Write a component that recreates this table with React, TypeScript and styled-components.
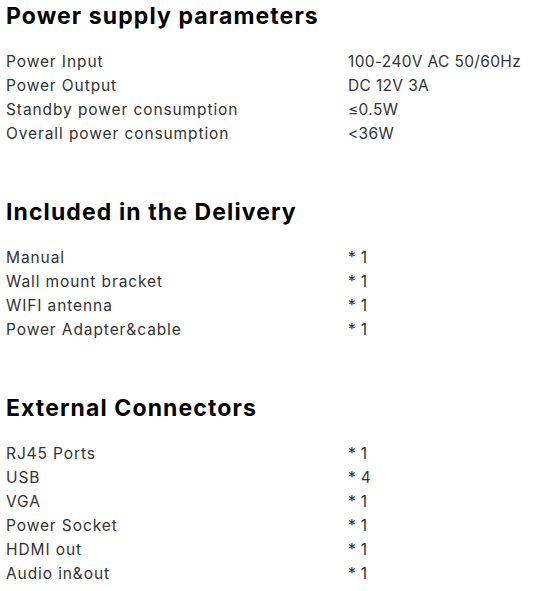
import React from "react";
import styled, { createGlobalStyle } from "styled-components";

const Global = createGlobalStyle`
  html, body { margin: 0; padding: 0; background: #fff; }
  body { font-family: Inter, "Liberation Sans", sans-serif; }
`;

const Page = styled.div`
  padding: 0 0 0 6px;
  display: flex;
  flex-direction: column;
`;

const Section = styled.section`
  display: flex;
  flex-direction: column;
  & + & { margin-top: 50px; }
`;

const Title = styled.h2`
  margin: 0 0 18px 0;
  font-size: 23px;
  line-height: 32px;
  font-weight: 700;
  color: #000;
  letter-spacing: 1.1px;
`;

const Rows = styled.div`
  display: grid;
  grid-template-columns: 342px 1fr;
  grid-auto-rows: 24px;
  font-size: 15.5px;
  line-height: 24px;
  color: #333;
`;

const Label = styled.div`
  white-space: nowrap;
  letter-spacing: 0.9px;
`;

const Value = styled.div`
  white-space: nowrap;
  letter-spacing: 0.35px;
`;

type Item = [string, string];

const sections: { title: string; items: Item[] }[] = [
  {
    title: "Power supply parameters",
    items: [
      ["Power Input", "100-240V AC 50/60Hz"],
      ["Power Output", "DC 12V 3A"],
      ["Standby power consumption", "≤0.5W"],
      ["Overall power consumption", "<36W"],
    ],
  },
  {
    title: "Included in the Delivery",
    items: [
      ["Manual", "* 1"],
      ["Wall mount bracket", "* 1"],
      ["WIFI antenna", "* 1"],
      ["Power Adapter&cable", "* 1"],
    ],
  },
  {
    title: "External Connectors",
    items: [
      ["RJ45 Ports", "* 1"],
      ["USB", "* 4"],
      ["VGA", "* 1"],
      ["Power Socket", "* 1"],
      ["HDMI out", "* 1"],
      ["Audio in&out", "* 1"],
    ],
  },
];

export default function App() {
  return (
    <Page>
      <Global />
      {sections.map((s) => (
        <Section key={s.title}>
          <Title>{s.title}</Title>
          <Rows>
            {s.items.map(([k, v]) => (
              <React.Fragment key={k}>
                <Label>{k}</Label>
                <Value>{v}</Value>
              </React.Fragment>
            ))}
          </Rows>
        </Section>
      ))}
    </Page>
  );
}
